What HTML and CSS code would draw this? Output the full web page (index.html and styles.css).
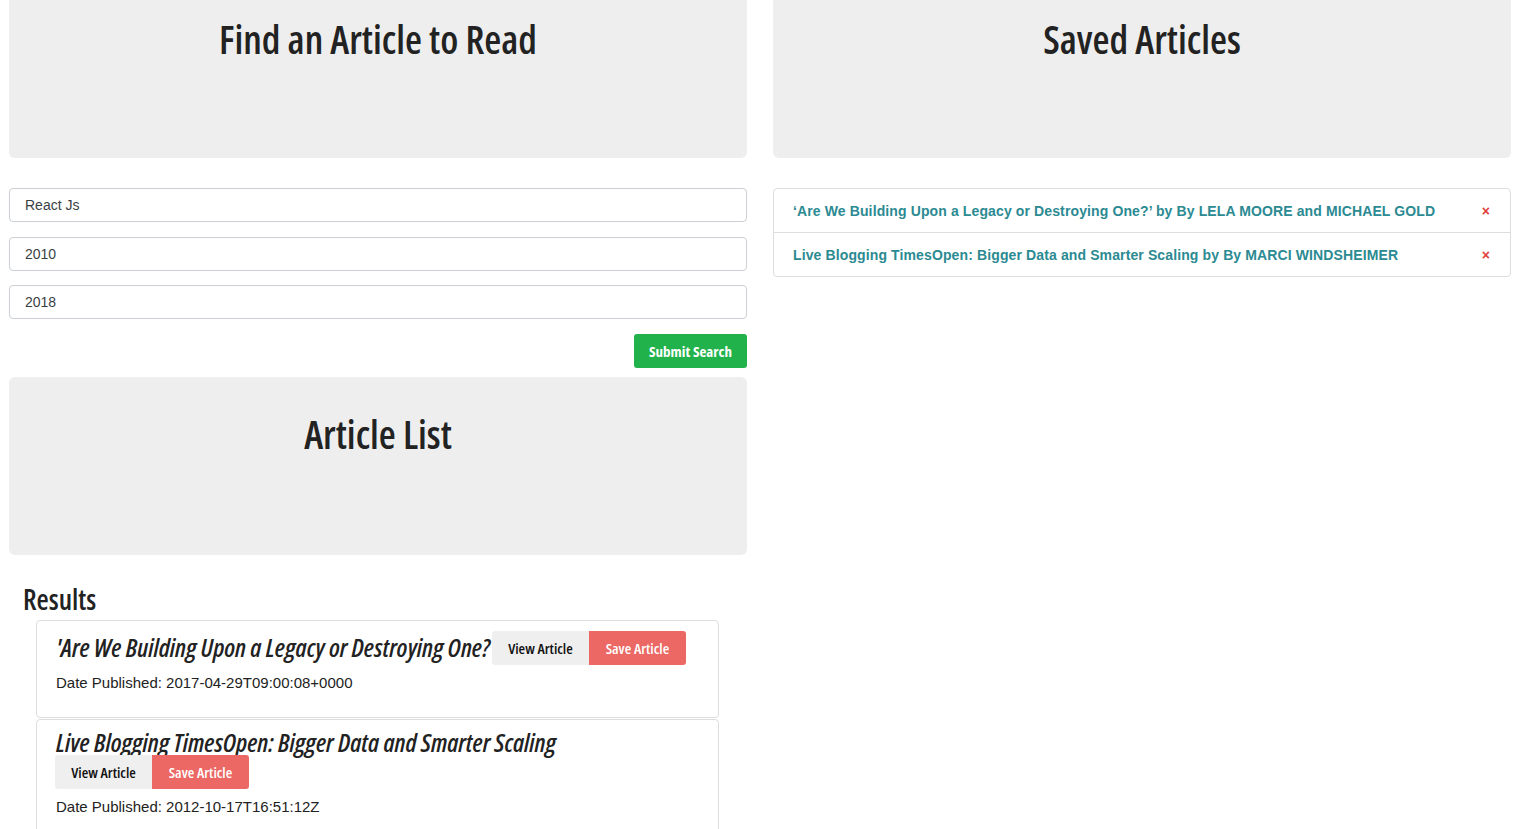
FILE: index.html
```html
<!DOCTYPE html>
<html lang="en">
<head>
<meta charset="utf-8">
<title>NYT React Search</title>
<link rel="stylesheet" href="styles.css">
</head>
<body>
<div class="page">
  <section class="col">
    <div class="jumbotron jumbotron-top">
      <h1 class="jumbo-title">Find an Article to Read</h1>
    </div>
    <form class="search-form">
      <input class="form-control" type="text" value="React Js">
      <input class="form-control" type="text" value="2010">
      <input class="form-control" type="text" value="2018">
      <div class="form-actions">
        <button type="button" class="btn btn-success">Submit Search</button>
      </div>
    </form>
    <div class="jumbotron">
      <h1 class="jumbo-title">Article List</h1>
    </div>
    <div class="results">
      <h2 class="results-title">Results</h2>
      <div class="result-card">
        <div class="result-head">
          <h3 class="result-title">'Are We Building Upon a Legacy or Destroying One?</h3> <span class="btn-group"><button type="button" class="btn btn-light">View Article</button><button type="button" class="btn btn-save">Save Article</button></span>
        </div>
        <p class="result-date">Date Published: 2017-04-29T09:00:08+0000</p>
      </div>
      <div class="result-card">
        <div class="result-head">
          <h3 class="result-title">Live Blogging TimesOpen: Bigger Data and Smarter Scaling</h3> <span class="btn-group"><button type="button" class="btn btn-light">View Article</button><button type="button" class="btn btn-save">Save Article</button></span>
        </div>
        <p class="result-date">Date Published: 2012-10-17T16:51:12Z</p>
      </div>
    </div>
  </section>
  <section class="col">
    <div class="jumbotron jumbotron-top">
      <h1 class="jumbo-title">Saved Articles</h1>
    </div>
    <ul class="saved-list">
      <li class="saved-item"><a class="saved-link" href="#">‘Are We Building Upon a Legacy or Destroying One?’ by By LELA MOORE and MICHAEL GOLD</a><span class="saved-remove">×</span></li>
      <li class="saved-item"><a class="saved-link" href="#">Live Blogging TimesOpen: Bigger Data and Smarter Scaling by By MARCI WINDSHEIMER</a><span class="saved-remove">×</span></li>
    </ul>
  </section>
</div>
</body>
</html>
```
FILE: styles.css
```css
* { box-sizing: border-box; }
html, body { margin: 0; padding: 0; background: #fff; }
body {
  font-family: "Liberation Sans", Arial, sans-serif;
  font-size: 14px;
  color: #212529;
}
.page {
  display: grid;
  grid-template-columns: 1fr 1fr;
  column-gap: 26px;
  padding: 0 8px 0 9px;
  align-items: start;
}
.col { display: flex; flex-direction: column; min-width: 0; }

.jumbotron {
  background: #eeeeee;
  border-radius: 6px;
  height: 178px;
  padding-top: 18px;
  text-align: center;
}
.jumbotron-top {
  height: 158px;
  padding-top: 0;
  border-radius: 0 0 6px 6px;
}
.jumbo-title {
  margin: 0;
  font-family: "Open Sans", "Roboto", sans-serif;
  font-stretch: 75%;
  font-weight: 600;
  font-size: 39px;
  line-height: 78px;
  color: #222;
}

.search-form {
  display: flex;
  flex-direction: column;
  gap: 14.5px;
  margin-top: 30px;
}
.form-control {
  display: block;
  width: 100%;
  height: 34px;
  padding: 0 15px;
  font-family: "Liberation Sans", Arial, sans-serif;
  font-size: 14px;
  color: #3a3f44;
  border: 1px solid #ccd0d4;
  border-radius: 4px;
  background: #fff;
}
.form-actions {
  display: flex;
  justify-content: flex-end;
  margin-top: 0;
  margin-bottom: 9px;
}
.btn {
  height: 34px;
  border: 0;
  padding: 0;
  font-family: "Open Sans", "Roboto", sans-serif;
  font-stretch: 75%;
  font-size: 15px;
  font-weight: 600;
  white-space: nowrap;
  cursor: pointer;
}
.btn-success {
  background: #22b24c;
  color: #fff;
  border-radius: 3px;
  width: 113px;
  font-weight: 700;
}
.btn-group { display: inline-flex; vertical-align: middle; }
.btn-light {
  background: #efefef;
  color: #111;
  border-radius: 3px 0 0 3px;
  width: 97px;
}
.btn-save {
  background: #eb6864;
  color: #fff;
  border-radius: 0 3px 3px 0;
  width: 97px;
}

.results { padding: 0 28px 0 14px; margin-top: 28px; }
.results-title {
  margin: 0 0 5px;
  font-family: "Open Sans", "Roboto", sans-serif;
  font-stretch: 75%;
  font-weight: 600;
  font-size: 28px;
  line-height: 32px;
  color: #222;
}
.result-card {
  margin-left: 13px;
  border: 1px solid #dddddd;
  border-radius: 4px;
  padding: 10px 20px 24px 18px;
  margin-bottom: 1px;
}
.result-head { line-height: 25px; font-size: 0; }
.result-head .btn-group { margin-left: 2px; }
.result-title {
  display: inline;
  margin: 0;
  padding-left: 1px;
  font-family: "Open Sans", "Roboto", sans-serif;
  font-stretch: 75%;
  font-style: italic;
  font-weight: 600;
  font-size: 25.5px;
  color: #222;
  vertical-align: middle;
}
.result-card:nth-child(3) .btn-group { margin-left: 0; }
.result-date {
  margin: 8px 0 0;
  padding-left: 1px;
  font-size: 15px;
  line-height: 20px;
  color: #222;
}

.saved-list {
  list-style: none;
  margin: 30px 0 0;
  padding: 0;
  border: 1px solid #dddddd;
  border-radius: 4px;
}
.saved-item {
  display: flex;
  align-items: center;
  justify-content: space-between;
  height: 44px;
  padding: 0 20px 0 19px;
  border-top: 1px solid #dddddd;
}
.saved-item:first-child { border-top: 0; height: 43px; }
.saved-link {
  font-weight: 700;
  font-size: 14px;
  letter-spacing: 0.12px;
  color: #2b8a92;
  text-decoration: none;
}
.saved-remove {
  color: #e0403c;
  font-weight: 700;
  font-size: 14px;
}
```
